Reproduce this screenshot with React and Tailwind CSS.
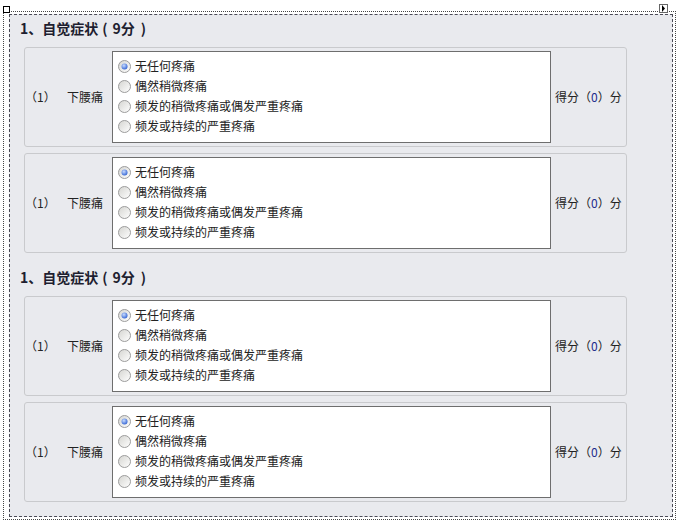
const OPTIONS = ["无任何疼痛", "偶然稍微疼痛", "频发的稍微疼痛或偶发严重疼痛", "频发或持续的严重疼痛"];

const SECTIONS = [
  { title: "1、自觉症状", score: 9, rows: [{ no: "（1）", name: "下腰痛", score: 0 }, { no: "（1）", name: "下腰痛", score: 0 }] },
  { title: "1、自觉症状", score: 9, rows: [{ no: "（1）", name: "下腰痛", score: 0 }, { no: "（1）", name: "下腰痛", score: 0 }] },
];

function Radio({ checked }) {
  return (
    <svg width="13" height="13" viewBox="0 0 13 13" className="shrink-0">
      <defs>
        <linearGradient id="ring" x1="0" y1="0" x2="1" y2="1">
          <stop offset="0" stopColor="#d4d4d0" />
          <stop offset="1" stopColor="#ffffff" />
        </linearGradient>
        <radialGradient id="dot" cx="0.4" cy="0.35" r="0.7">
          <stop offset="0" stopColor="#c8dcff" />
          <stop offset="1" stopColor="#2d5fd2" />
        </radialGradient>
      </defs>
      <circle cx="6.5" cy="6.5" r="6" fill="url(#ring)" stroke="#9c9c9c" />
      {checked && <circle cx="6.5" cy="6.5" r="3" fill="url(#dot)" />}
    </svg>
  );
}

function Row({ row }) {
  return (
    <div className="flex items-center h-[100px] w-[603px] ml-[14px] border border-[#c9cacd] rounded-[3px]">
      <div className="flex w-[87px] shrink-0">
        <span className="w-[42px] shrink-0">{row.no}</span>
        <span>{row.name}</span>
      </div>
      <div className="w-[439px] h-[92px] shrink-0 bg-white border border-[#6e6e6e] pl-[5px] pt-[4px]">
        {OPTIONS.map((opt, i) => (
          <div key={i} className="flex items-center gap-[4px] h-[20px]">
            <Radio checked={i === 0} />
            <span>{opt}</span>
          </div>
        ))}
      </div>
      <div className="ml-[4px] whitespace-nowrap">
        得分（<span className="text-[#1b2a8c]">{row.score}</span>）分
      </div>
    </div>
  );
}

export default function App() {
  return (
    <div className="relative w-[680px] h-[522px] bg-white overflow-hidden text-[12px] leading-[20px] text-[#222] [text-spacing-trim:space-all] font-['Noto_Sans_CJK_SC','Liberation_Sans',sans-serif]">
      {/* 外框 */}
      <div className="ml-[3px] mt-[11px] w-[673px] h-[509px] border border-dotted border-[#444] pl-[5px] pt-[2px]">
        <div className="w-[664px] h-[503px] border border-dashed border-[#4a4a55] bg-[#e9eaee] pl-[10px]">
          {SECTIONS.map((sec, s) => (
            <div key={s} className={s > 0 ? "mt-[11px]" : ""}>
              <div className="flex h-[32px] pt-[3px] text-[14px] leading-[20px] font-bold text-[#1e1e30]">
                <span>{sec.title}</span>
                <span className="ml-[4px]">(</span>
                <span className="ml-[5px]">{sec.score}分</span>
                <span className="ml-[6px]">)</span>
              </div>
              <div className="flex flex-col gap-[6px] -ml-[10px]">
                {sec.rows.map((row, i) => (
                  <Row key={i} row={row} />
                ))}
              </div>
            </div>
          ))}
        </div>
      </div>

      {/* 角标 */}
      <div className="absolute left-[3px] top-[6px] w-[7px] h-[7px] bg-white border border-black" />
      <div className="absolute left-[659px] top-[4px] w-[9px] h-[9px] bg-white border border-[#666] flex items-center justify-center">
        <svg width="5" height="7" viewBox="0 0 5 7">
          <path d="M1 0 L4 3.5 L1 7 Z" fill="#000" />
        </svg>
      </div>
    </div>
  );
}
